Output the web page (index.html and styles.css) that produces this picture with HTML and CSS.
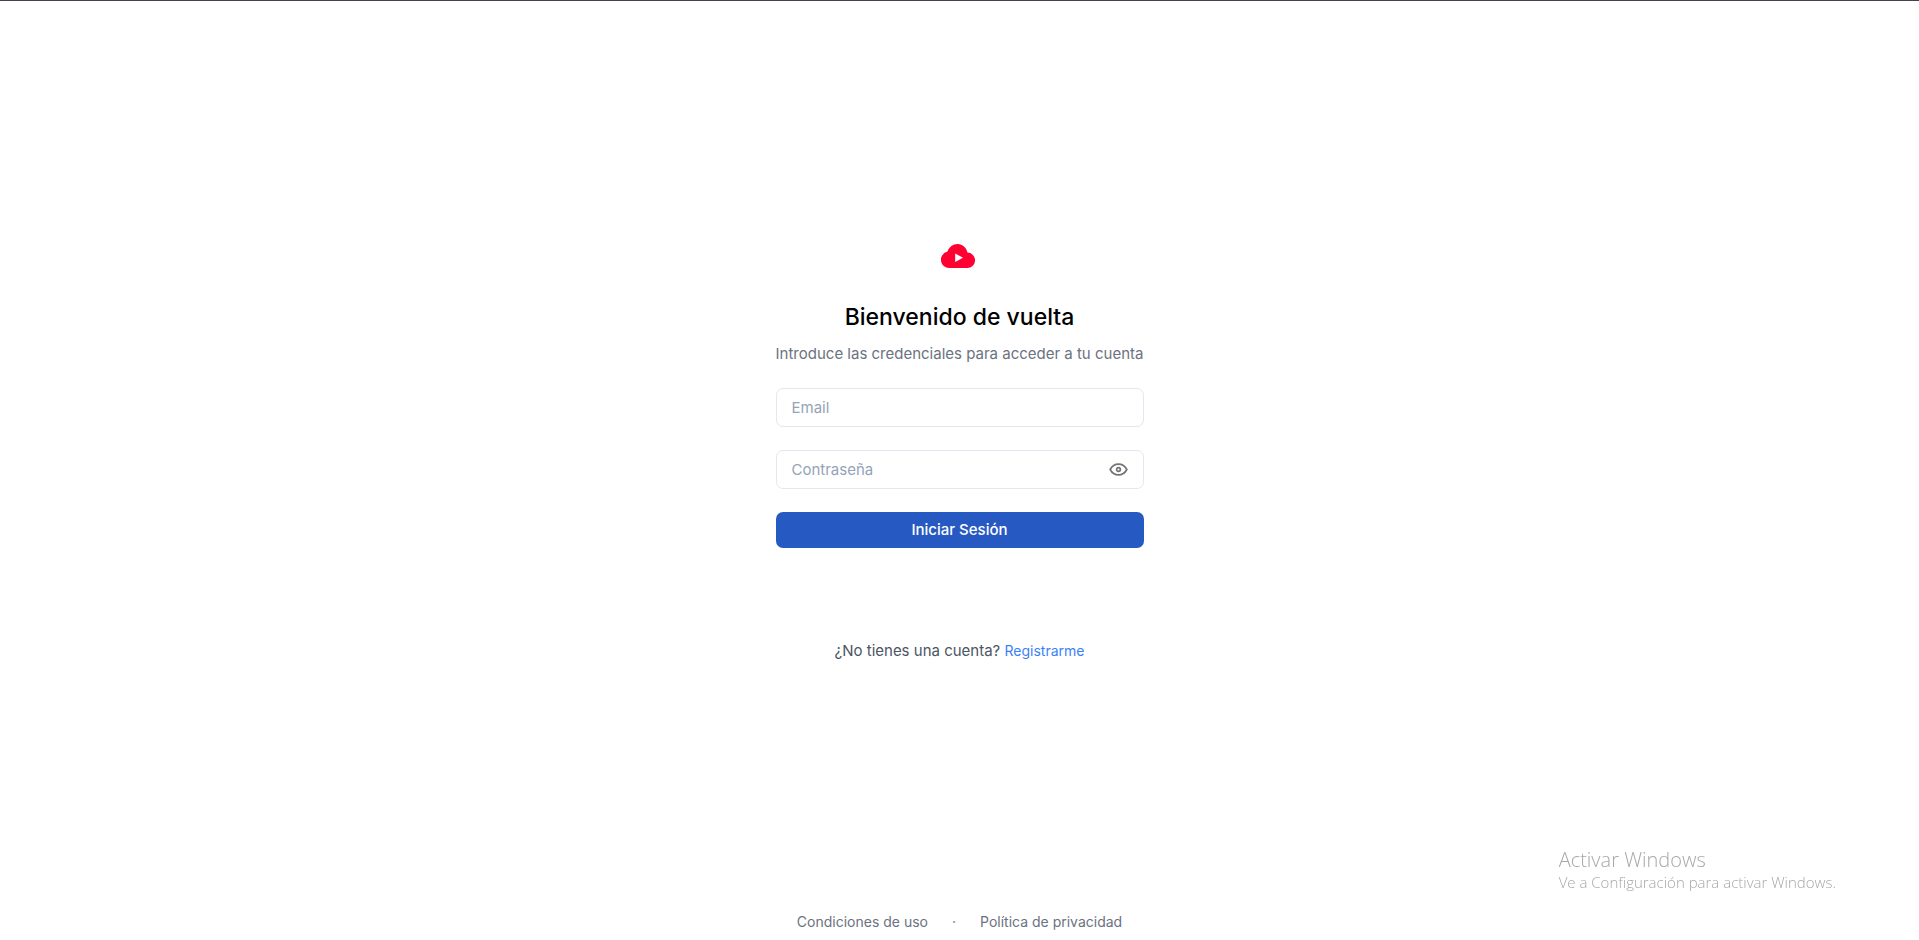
FILE: index.html
```html
<!DOCTYPE html>
<html lang="es">
<head>
<meta charset="utf-8">
<meta name="viewport" content="width=device-width, initial-scale=1">
<title>Iniciar sesión</title>
<link rel="stylesheet" href="styles.css">
</head>
<body>
<main class="login">
  <svg class="logo" viewBox="0 0 34 24" aria-hidden="true">
    <path fill="#ff0033" d="M8.300 24A8.300 8.300 0 0 1 6.400 7.600C8 3 12.100 0 16.600 0C21.500 0 25.500 3.500 26.400 8.600A7.700 7.700 0 0 1 26.300 24Z"/>
    <path fill="#fff" d="M14.200 9.500L22 13.700L14.200 18Z"/>
  </svg>
  <h1 class="title">Bienvenido de vuelta</h1>
  <p class="subtitle">Introduce las credenciales para acceder a tu cuenta</p>
  <form class="form">
    <input class="input" type="email" placeholder="Email" aria-label="Email">
    <div class="field">
      <input class="input input-password" type="password" placeholder="Contraseña" aria-label="Contraseña">
      <button class="reveal" type="button" aria-label="Mostrar contraseña">
        <svg class="eye" viewBox="0 0 20 14" fill="none" stroke="#737373" stroke-width="1.8" aria-hidden="true">
          <path stroke-linejoin="round" d="M1 7C3 3.300 6.200 1.200 10 1.200S17 3.300 19 7C17 10.700 13.800 12.800 10 12.800S3 10.700 1 7Z"/>
          <circle cx="10" cy="7" r="2"/>
        </svg>
      </button>
    </div>
    <button class="submit" type="submit">Iniciar Sesión</button>
  </form>
  <p class="signup">¿No tienes una cuenta? <a class="signup-link" href="#">Registrarme</a></p>
</main>
<footer class="footer">
  <a class="footer-link" href="#">Condiciones de uso</a>
  <span>·</span>
  <a class="footer-link" href="#">Política de privacidad</a>
</footer>
<aside class="watermark">
  <p class="watermark-title">Activar Windows</p>
  <p class="watermark-text">Ve a Configuración para activar Windows.</p>
</aside>
</body>
</html>
```
FILE: styles.css
```css
* {
  box-sizing: border-box;
}

body {
  display: flex;
  flex-direction: column;
  min-height: 100vh;
  margin: 0;
  border-top: 1px solid #42414d;
  background: #fff;
  font-family: Inter, "Liberation Sans", sans-serif;
  font-size: 15px;
  line-height: 24px;
}

h1,
p {
  margin: 0;
}

a {
  text-decoration: none;
}

.login {
  flex: 1;
  display: flex;
  flex-direction: column;
  align-items: center;
  justify-content: center;
  padding: 16px 16px 21px;
}

.logo {
  width: 34px;
  height: 24px;
  margin: 0 4px 33px 0;
}

.title {
  margin-bottom: 9px;
  color: #000;
  font-size: 23px;
  font-weight: 500;
  line-height: 32px;
}

.subtitle {
  margin-bottom: 22px;
  color: #6b7280;
}

.form {
  display: flex;
  flex-direction: column;
  gap: 23px;
  width: 100%;
  max-width: 368px;
}

.field {
  position: relative;
}

.input {
  display: block;
  width: 100%;
  height: 39px;
  padding: 0 15px;
  border: 1px solid #e2e8f0;
  border-radius: 7px;
  background: #fff;
  color: #0f172a;
  font: inherit;
}

.input::placeholder {
  color: #94a3b8;
}

.input-password {
  padding-right: 48px;
}

.reveal {
  position: absolute;
  top: 0;
  right: 16px;
  bottom: 0;
  display: flex;
  align-items: center;
  padding: 0;
  border: 0;
  background: none;
}

.eye {
  width: 19px;
  height: 13px;
}

.submit {
  height: 36px;
  border: 0;
  border-radius: 7px;
  background: #265ac2;
  color: #fff;
  font: inherit;
  font-weight: 500;
}

.signup {
  margin-top: 91px;
  color: #4b5563;
}

.signup-link {
  color: #3b82f6;
  font-size: 14px;
}

.footer {
  display: flex;
  justify-content: center;
  gap: 24px;
  padding-bottom: 6px;
  color: #6b7280;
  font-size: 14px;
}

.footer-link {
  color: inherit;
}

.watermark {
  position: fixed;
  right: 83px;
  bottom: 48px;
  color: #a8a8a8;
  font-family: "Open Sans", "Noto Sans", sans-serif;
  font-weight: 300;
}

.watermark-title {
  font-size: 20px;
}

.watermark-text {
  font-size: 15px;
  line-height: 20px;
}
```
